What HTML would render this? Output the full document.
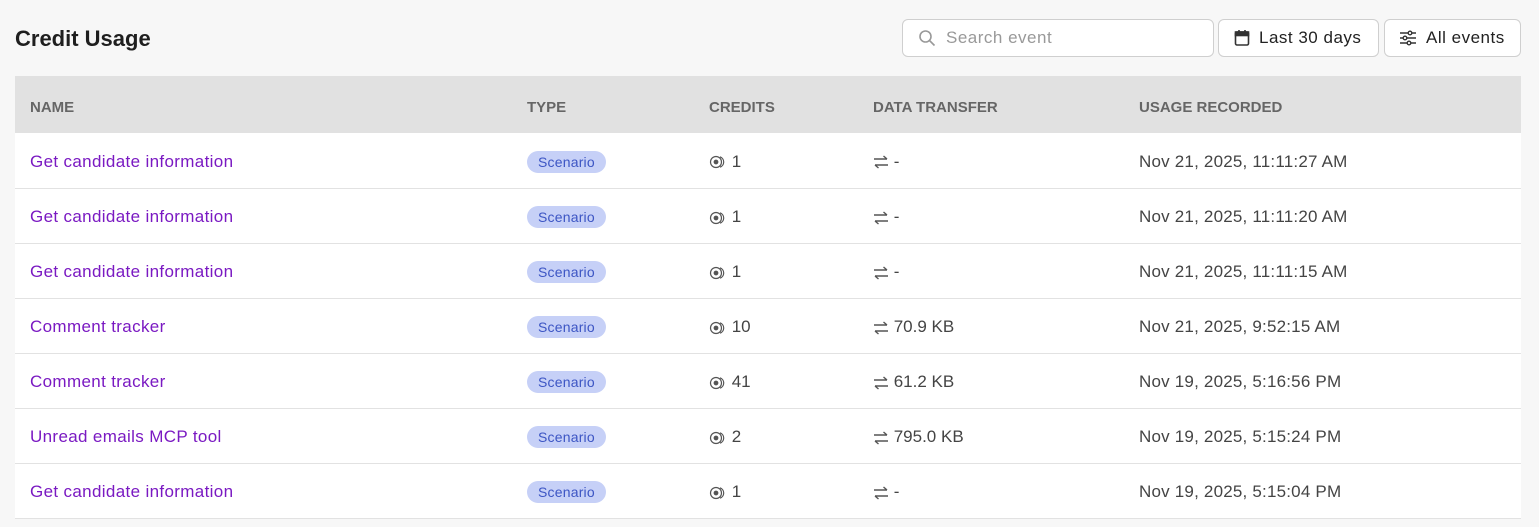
<!DOCTYPE html>
<html><head><meta charset="utf-8"><style>
*{box-sizing:border-box;margin:0;padding:0}
body{width:1539px;height:527px;background:#f7f7f7;font-family:"Liberation Sans",sans-serif;position:relative;overflow:hidden;color:#333}
h1{position:absolute;left:15px;top:26px;font-size:22px;font-weight:bold;color:#1f1f1f}
.ctl{position:absolute;top:19px;height:38px;border:1px solid #cfcfcf;border-radius:6px;background:#fff;display:flex;align-items:center;font-size:17px;color:#222;letter-spacing:0.5px}
table{position:absolute;left:15px;top:76px;width:1506px;border-collapse:collapse;background:#fff}
th{background:#e1e1e1;height:57px;text-align:left;font-size:15px;color:#666;font-weight:bold;padding-left:15px;padding-top:6px}
td{height:55px;border-bottom:1px solid #e2e2e2;font-size:17px;color:#444;padding-left:15px;padding-top:3px}
td.n{color:#7a19c2;letter-spacing:0.35px}
td.d{letter-spacing:0.2px}
.b{display:inline-block;background:#c6d0f7;color:#3c55c4;font-size:14px;border-radius:11px;padding:3px 11px;letter-spacing:0.2px}
svg{vertical-align:middle}
</style></head><body>
<h1>Credit Usage</h1>
<div class="ctl" style="left:902px;width:312px;color:#999"><svg style="margin:0 10px 0 15px" width="18" height="18" viewBox="0 0 18 18" fill="none" stroke="#999" stroke-width="1.6"><circle cx="7.5" cy="7.5" r="5.5"/><path d="M11.5 11.5l5 5"/></svg>Search event</div>
<div class="ctl" style="left:1218px;width:161px"><svg style="margin:0 9px 0 15px" width="16" height="18" viewBox="0 0 16 18" fill="#333" stroke="#333" stroke-width="1.6"><rect x="1.5" y="3" width="13" height="13" rx="1.5" fill="none"/><rect x="1.5" y="3" width="13" height="3.5"/><path d="M5 1v3M11 1v3"/></svg>Last 30 days</div>
<div class="ctl" style="left:1384px;width:137px"><svg style="margin:0 9px 0 14px" width="18" height="16" viewBox="0 0 18 16" fill="none" stroke="#333" stroke-width="1.4"><path d="M1 3h16M1 8h16M1 13h16"/><circle cx="11" cy="3" r="1.8" fill="#fff"/><circle cx="6" cy="8" r="1.8" fill="#fff"/><circle cx="10" cy="13" r="1.8" fill="#fff"/></svg>All events</div>
<table>
<tr><th style="width:497px">NAME</th><th style="width:182px">TYPE</th><th style="width:164px">CREDITS</th><th style="width:266px">DATA TRANSFER</th><th>USAGE RECORDED</th></tr>
<tbody id="b"></tbody>
</table>
<script>
var d=[["Get candidate information","1","-","Nov 21, 2025, 11:11:27 AM"],["Get candidate information","1","-","Nov 21, 2025, 11:11:20 AM"],["Get candidate information","1","-","Nov 21, 2025, 11:11:15 AM"],["Comment tracker","10","70.9 KB","Nov 21, 2025, 9:52:15 AM"],["Comment tracker","41","61.2 KB","Nov 19, 2025, 5:16:56 PM"],["Unread emails MCP tool","2","795.0 KB","Nov 19, 2025, 5:15:24 PM"],["Get candidate information","1","-","Nov 19, 2025, 5:15:04 PM"]];
var ci='<svg width="18" height="14" viewBox="0 0 18 14" fill="none" stroke="#555" stroke-width="1.2"><circle cx="7" cy="7" r="5.5"/><circle cx="7" cy="7" r="1.8" fill="#555"/><path d="M11 1.8a5.5 5.5 0 0 1 0 10.4"/></svg> ';
var ar='<svg width="16" height="14" viewBox="0 0 16 14" fill="none" stroke="#555" stroke-width="1.4"><path d="M1 4h13M10.5 1l3.5 3M15 10H2M5.5 13L2 10"/></svg> ';
document.getElementById('b').innerHTML=d.map(r=>'<tr><td class="n">'+r[0]+'</td><td><span class="b">Scenario</span></td><td>'+ci+r[1]+'</td><td>'+ar+r[2]+'</td><td class="d">'+r[3]+'</td></tr>').join('');
</script>
</body></html>
